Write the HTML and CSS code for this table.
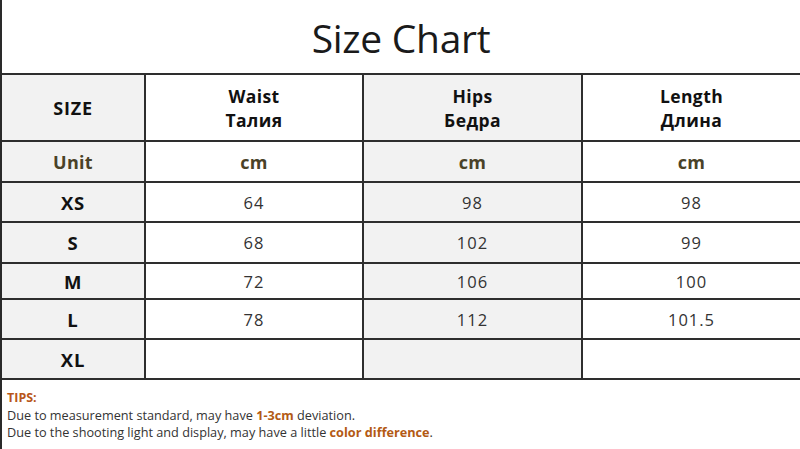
FILE: index.html
```html
<!DOCTYPE html>
<html>
<head>
<meta charset="utf-8">
<link rel="stylesheet" href="styles.css">
</head>
<body>
<div class="page">
  <h1 class="title">Size Chart</h1>
  <div class="chart">
    <div class="cell gray head">SIZE</div>
    <div class="cell head">Waist<br>Талия</div>
    <div class="cell gray head">Hips<br>Бедра</div>
    <div class="cell head">Length<br>Длина</div>

    <div class="cell gray unit">Unit</div>
    <div class="cell unit">cm</div>
    <div class="cell gray unit">cm</div>
    <div class="cell unit">cm</div>

    <div class="cell gray size">XS</div>
    <div class="cell num">64</div>
    <div class="cell gray num">98</div>
    <div class="cell num">98</div>

    <div class="cell gray size">S</div>
    <div class="cell num">68</div>
    <div class="cell gray num">102</div>
    <div class="cell num">99</div>

    <div class="cell gray size">M</div>
    <div class="cell num">72</div>
    <div class="cell gray num">106</div>
    <div class="cell num">100</div>

    <div class="cell gray size">L</div>
    <div class="cell num">78</div>
    <div class="cell gray num">112</div>
    <div class="cell num">101.5</div>

    <div class="cell gray size">XL</div>
    <div class="cell num"></div>
    <div class="cell gray num"></div>
    <div class="cell num"></div>
  </div>
  <div class="tips">
    <div class="tips-title">TIPS:</div>
    <div>Due to measurement standard, may have <b class="hl">1-3cm</b> deviation.</div>
    <div>Due to the shooting light and display, may have a little <b class="hl">color difference</b>.</div>
  </div>
</div>
</body>
</html>
```

FILE: styles.css
```css
html, body {
  margin: 0;
  padding: 0;
  background: #fff;
}
body {
  font-family: "Open Sans", "Noto Sans", sans-serif;
  color: #111;
}
.page {
  width: 798px;
  height: 449px;
  border-left: 2px solid #2a2a2a;
  overflow: hidden;
}
.title {
  margin: 0;
  height: 73px;
  display: flex;
  align-items: center;
  justify-content: center;
  font-size: 39px;
  font-weight: 400;
  color: #1a1a1a;
  letter-spacing: -0.3px;
  padding-top: 2px;
  box-sizing: border-box;
}
.chart {
  display: grid;
  grid-template-columns: 142px 216px 217px 1fr;
  grid-template-rows: 65px 39px 38px 39px 34px 38px 38px;
  gap: 2px;
  background: #2e2e2e;
  border-top: 2px solid #2e2e2e;
  border-bottom: 2px solid #2e2e2e;
}
.cell {
  background: #fff;
  display: flex;
  align-items: center;
  justify-content: center;
  text-align: center;
}
.cell.gray {
  background: #f2f2f2;
}
.head {
  font-weight: 700;
  font-size: 17.5px;
  line-height: 24px;
  color: #111;
  letter-spacing: 0.4px;
}
.head:first-child {
  font-size: 18px;
  letter-spacing: 0.8px;
}
.unit {
  font-weight: 700;
  font-size: 18px;
  color: #4a4228;
  letter-spacing: 0.3px;
}
.size {
  font-weight: 700;
  font-size: 18.5px;
  color: #111;
  letter-spacing: 0.8px;
}
.num {
  font-size: 16.5px;
  color: #333;
  letter-spacing: 1px;
}
.tips {
  padding: 9px 0 0 5px;
  font-size: 12.7px;
  line-height: 17px;
  color: #333;
}
.tips-title {
  font-weight: 700;
  color: #b8561a;
  font-size: 12.5px;
  line-height: 18px;
}
.hl {
  color: #b35a14;
  font-weight: 700;
}
```
